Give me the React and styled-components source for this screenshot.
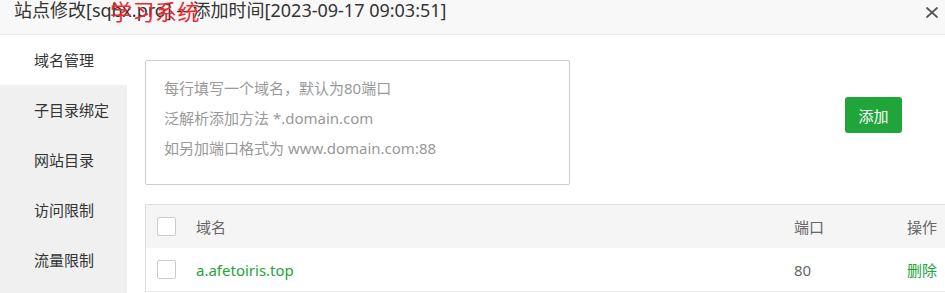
import React from "react";
import styled, { createGlobalStyle } from "styled-components";

const Global = createGlobalStyle`
  html, body { margin: 0; padding: 0; background: #fff; }
  body {
    font-family: "Noto Sans", "Noto Sans CJK SC", sans-serif;
    color: #333;
    width: 945px;
    height: 293px;
    overflow: hidden;
  }
`;

const Layer = styled.div`
  width: 945px;
  height: 293px;
  display: flex;
  flex-direction: column;
  overflow: hidden;
`;

const Header = styled.div`
  position: relative;
  height: 34px;
  flex: none;
  background: #f8f8f8;
  border-bottom: 1px solid #e8e8e8;
  display: flex;
  justify-content: space-between;
  align-items: flex-start;
  padding: 0 6px 0 14px;
`;

const Title = styled.div`
  font-size: 18px;
  line-height: 18px;
  color: #333;
  white-space: nowrap;
  margin-top: 1px;
`;

const Watermark = styled.span`
  position: absolute;
  left: 110px;
  top: -3px;
  font-size: 22px;
  line-height: 26px;
  color: #ea2b33;
  font-family: "Noto Sans CJK SC", sans-serif;
  letter-spacing: 0.5px;
`;

const Close = styled.button`
  border: 0;
  background: transparent;
  padding: 0;
  margin-top: 7px;
  width: 14px;
  height: 11px;
  display: flex;
  cursor: pointer;
`;

const Body = styled.div`
  flex: 1;
  display: flex;
  min-height: 0;
`;

const Side = styled.div`
  width: 127px;
  flex: none;
  background: #f0f0f0;
`;

const SideItem = styled.div`
  height: 50px;
  line-height: 50px;
  padding-left: 34px;
  font-size: 15px;
  color: #333;
  background: ${(p) => (p.$active ? "#fff" : "transparent")};
`;

const Main = styled.div`
  flex: 1;
  padding: 25px 0 0 18px;
  overflow: hidden;
`;

const FormRow = styled.div`
  display: flex;
  align-items: flex-start;
`;

const Hint = styled.div`
  width: 425px;
  height: 125px;
  box-sizing: border-box;
  border: 1px solid #ccc;
  border-radius: 2px;
  padding: 12px 18px;
  font-size: 15px;
  line-height: 30px;
  color: #999;
`;

const AddButton = styled.button`
  margin: 37px 0 0 275px;
  width: 57px;
  height: 36px;
  border: 0;
  border-radius: 3px;
  background: #20a53a;
  color: #fff;
  font-family: "Noto Sans", "Noto Sans CJK SC", sans-serif;
  font-size: 15px;
  padding: 0;
`;

const Table = styled.div`
  margin-top: 19px;
  width: 801px;
  border-top: 1px solid #ddd;
  border-left: 1px solid #ddd;
`;

const Row = styled.div`
  display: grid;
  grid-template-columns: 50px 1fr 103px 40px;
  align-items: center;
  height: 43px;
  padding-right: 10px;
  font-size: 15px;
  color: #666;
  background: ${(p) => (p.$head ? "#f5f5f5" : "#fff")};
  border-bottom: ${(p) => (p.$head ? "0" : "1px solid #eee")};
`;

const Check = styled.span`
  display: block;
  width: 19px;
  height: 19px;
  box-sizing: border-box;
  border: 1px solid #ccc;
  border-radius: 2px;
  background: #fff;
  margin-left: 11px;
`;

const Cell = styled.span`
  color: ${(p) => (p.$green ? "#20a53a" : "#666")};
  text-align: ${(p) => (p.$right ? "right" : "left")};
  white-space: nowrap;
`;

export default function App() {
  return (
    <>
      <Global />
      <Layer>
        <Header>
          <Title>站点修改[sqbx.pro] -- 添加时间[2023-09-17 09:03:51]</Title>
          <Watermark>学习系统</Watermark>
          <Close aria-label="close">
            <svg width="14" height="11" viewBox="0 0 14 11">
              <path d="M1.5 0.5 L12.5 10.5 M12.5 0.5 L1.5 10.5" stroke="#555" strokeWidth="1.8" fill="none" />
            </svg>
          </Close>
        </Header>
        <Body>
          <Side>
            <SideItem $active>域名管理</SideItem>
            <SideItem>子目录绑定</SideItem>
            <SideItem>网站目录</SideItem>
            <SideItem>访问限制</SideItem>
            <SideItem>流量限制</SideItem>
          </Side>
          <Main>
            <FormRow>
              <Hint>
                <div>每行填写一个域名，默认为80端口</div>
                <div>泛解析添加方法 *.domain.com</div>
                <div>如另加端口格式为 www.domain.com:88</div>
              </Hint>
              <AddButton>添加</AddButton>
            </FormRow>
            <Table>
              <Row $head>
                <Check />
                <Cell>域名</Cell>
                <Cell>端口</Cell>
                <Cell $right>操作</Cell>
              </Row>
              <Row>
                <Check />
                <Cell $green>a.afetoiris.top</Cell>
                <Cell>80</Cell>
                <Cell $green $right>删除</Cell>
              </Row>
            </Table>
          </Main>
        </Body>
      </Layer>
    </>
  );
}
